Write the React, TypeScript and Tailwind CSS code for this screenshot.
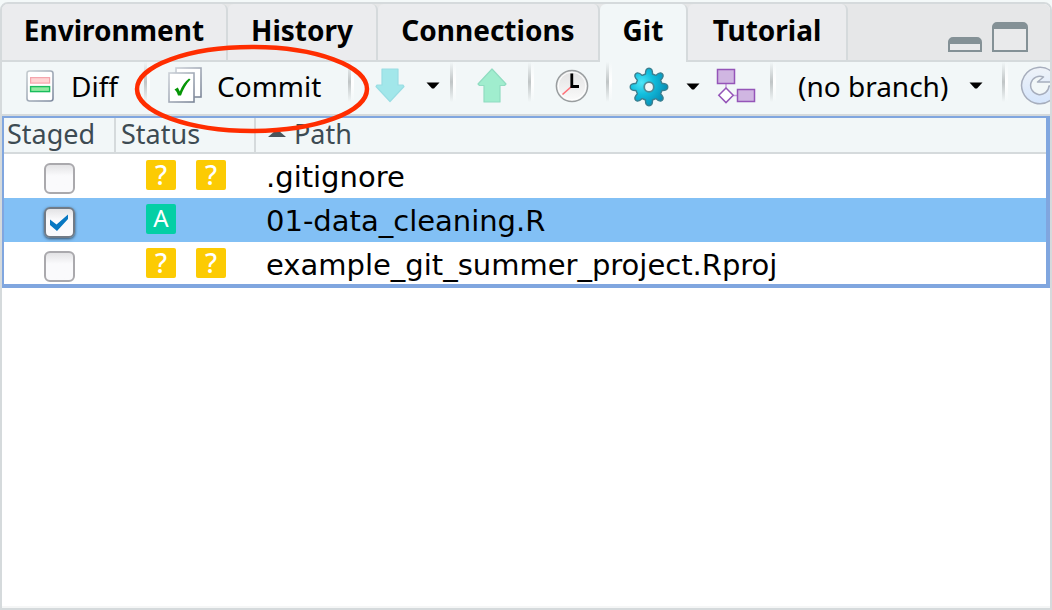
import { useState } from "react";

const tabs = [
  { name: "Environment", width: "w-[226px]" },
  { name: "History", width: "w-[150px]" },
  { name: "Connections", width: "w-[222px]" },
  { name: "Git", width: "w-[88px]" },
  { name: "Tutorial", width: "w-[160px]" },
];

type FileEntry = { path: string; status: string[]; staged: boolean };

const initialFiles: FileEntry[] = [
  { path: ".gitignore", status: ["?", "?"], staged: false },
  { path: "01-data_cleaning.R", status: ["A"], staged: true },
  { path: "example_git_summer_project.Rproj", status: ["?", "?"], staged: false },
];

function DiffIcon() {
  return (
    <svg width="28" height="32" viewBox="0 0 28 32" aria-hidden="true">
      <defs>
        <linearGradient id="paper" x1="0" y1="0" x2="1" y2="1">
          <stop offset="0" stopColor="#c5ccd0" />
          <stop offset="1" stopColor="#7f8ba0" />
        </linearGradient>
      </defs>
      <rect x="1" y="1" width="26" height="30" rx="2.5" fill="#fff" stroke="url(#paper)" strokeWidth="1.6" />
      <rect x="4.6" y="7.6" width="19" height="5.5" fill="#ffd4d4" stroke="#f5a5ad" strokeWidth="1.2" />
      <rect x="4.6" y="16.6" width="19" height="5" fill="#90e8a0" stroke="#19bd5c" strokeWidth="1.4" />
    </svg>
  );
}

function CommitIcon() {
  return (
    <svg width="36" height="38" viewBox="0 0 36 38" aria-hidden="true">
      <defs>
        <linearGradient id="sheet" x1="0" y1="0" x2="1" y2="1">
          <stop offset="0" stopColor="#cbd0d7" />
          <stop offset="1" stopColor="#7c8698" />
        </linearGradient>
      </defs>
      <rect x="8" y="1" width="25" height="29" fill="#fff" stroke="url(#sheet)" strokeWidth="1.6" />
      <rect x="1" y="6" width="25" height="29" fill="#fff" stroke="url(#sheet)" strokeWidth="1.6" />
      <path d="M6.5 22.5 L9.8 20.5 L11.8 24.5 C14 19 17 14.5 21 11.5 L22.5 12.5 C18 17 15.3 22.5 13 28.5 L10 28.5 C9.3 26 8.2 23.8 6.5 22.5Z" fill="#079607" />
    </svg>
  );
}

function ArrowIcon({ up }: { up?: boolean }) {
  return (
    <svg width="30" height="36" viewBox="0 0 30 36" aria-hidden="true">
      {up ? (
        <path d="M15 1 L29 16 L27.5 17.5 H23 V34 H7 V17.5 H2.5 L1 16Z" fill="#a0edce" stroke="#90dcc1" strokeWidth="1.2" strokeLinejoin="round" />
      ) : (
        <path d="M7 1 H23 V17 H28 L29 18.5 L15 33.5 L1 18.5 L2 17 H7Z" fill="#a2e7ea" stroke="#99dde3" strokeWidth="1.2" strokeLinejoin="round" />
      )}
    </svg>
  );
}

function ClockIcon() {
  return (
    <svg width="34" height="34" viewBox="0 0 34 34" aria-hidden="true">
      <defs>
        <linearGradient id="dial" x1="0" y1="0" x2="0" y2="1">
          <stop offset="0" stopColor="#e2e2e2" />
          <stop offset="1" stopColor="#fbfbfb" />
        </linearGradient>
      </defs>
      <circle cx="17" cy="17" r="15.6" fill="url(#dial)" stroke="#999d9f" strokeWidth="1.5" />
      <circle cx="17" cy="17" r="13.8" fill="none" stroke="#fff" strokeWidth="1" />
      <path d="M16.5 17.5 L7.5 25.5" stroke="#ff7078" strokeWidth="1.6" />
      <path d="M16.8 4.5 V17.5 H24" fill="none" stroke="#000" strokeWidth="2.8" />
    </svg>
  );
}

function GearIcon() {
  return (
    <svg width="40" height="40" viewBox="0 0 40 40" aria-hidden="true">
      <defs>
        <radialGradient id="gear" cx="0.3" cy="0.38" r="0.7">
          <stop offset="0" stopColor="#4fe6f8" />
          <stop offset="0.45" stopColor="#12bedd" />
          <stop offset="1" stopColor="#068db5" />
        </radialGradient>
      </defs>
      <path
        d="M16.5 7 Q16.3 1.2 20 1.2 Q23.7 1.2 23.5 7 L26.8 8.4 Q30.8 4.4 33.3 6.7 Q35.6 9.2 31.6 13.2 L33 16.5 Q38.8 16.3 38.8 20 Q38.8 23.7 33 23.5 L31.6 26.8 Q35.6 30.8 33.3 33.3 Q30.8 35.6 26.8 31.6 L23.5 33 Q23.7 38.8 20 38.8 Q16.3 38.8 16.5 33 L13.2 31.6 Q9.2 35.6 6.7 33.3 Q4.4 30.8 8.4 26.8 L7 23.5 Q1.2 23.7 1.2 20 Q1.2 16.3 7 16.5 L8.4 13.2 Q4.4 9.2 6.7 6.7 Q9.2 4.4 13.2 8.4Z"
        fill="url(#gear)"
        stroke="#3b7f90"
        strokeWidth="1.4"
        strokeLinejoin="round"
      />
      <circle cx="20" cy="20" r="4.8" fill="#f2f7f8" stroke="#4f8995" strokeWidth="1.8" />
    </svg>
  );
}

function BranchIcon() {
  return (
    <svg width="40" height="36" viewBox="0 0 40 36" aria-hidden="true">
      <g stroke="#9555b8" strokeWidth="1.5">
        <path d="M10 15 V21 M17 27.5 H22" fill="none" stroke="#c79fdd" />
        <rect x="1.5" y="1.5" width="17" height="14" fill="#d0b6e2" />
        <rect x="21.5" y="21.5" width="17" height="12" fill="#d0b6e2" />
        <path d="M10 20 L17.2 27.3 L10 34.6 L2.8 27.3Z" fill="#fff" />
      </g>
    </svg>
  );
}

function RefreshIcon() {
  return (
    <svg width="40" height="40" viewBox="0 0 40 40" className="shrink-0" aria-hidden="true">
      <defs>
        <linearGradient id="refresh" x1="0" y1="0" x2="0" y2="1">
          <stop offset="0" stopColor="#eff3f8" />
          <stop offset="1" stopColor="#d5e5fc" />
        </linearGradient>
      </defs>
      <path
        d="M33 7 A18.2 18.2 0 1 0 38 20 H29 A9.2 9.2 0 1 1 23.5 11 L17.5 16 H38 V2Z"
        fill="url(#refresh)"
        stroke="#a7aebd"
        strokeWidth="1.5"
        strokeLinejoin="round"
      />
    </svg>
  );
}

function Caret() {
  return (
    <svg width="14" height="8" viewBox="0 0 14 8" className="shrink-0" aria-hidden="true">
      <path d="M0.5 0.5 H13.5 L8 6.5 H6Z" fill="#000" />
    </svg>
  );
}

function Separator() {
  return (
    <div className="flex h-10 w-[6px] shrink-0 self-start">
      <div className="w-[3px] bg-linear-to-b from-[#f2f7f8] via-[#c0c5c6] to-[#f2f7f8]" />
      <div className="w-[3px] bg-linear-to-b from-[#f2f7f8] via-white to-[#f2f7f8]" />
    </div>
  );
}

export default function App() {
  const [files, setFiles] = useState(initialFiles);
  const [selected, setSelected] = useState(1);
  const [activeTab, setActiveTab] = useState("Git");

  const toggle = (index: number) =>
    setFiles(files.map((f, i) => (i === index ? { ...f, staged: !f.staged } : f)));

  return (
    <div className="flex min-h-screen flex-col bg-[#f4f9f9] pt-[2px] font-['Noto_Sans','Open_Sans',sans-serif] text-[28px] leading-8 text-black">
      <main className="relative flex flex-1 flex-col overflow-hidden rounded-t-lg border-2 border-[#d5dadc] bg-white">
        <header className="flex h-[58px] shrink-0 bg-[#e6e7e8]">
          <nav className="flex" role="tablist" aria-label="Pane">
            {tabs.map((tab) => (
              <button
                key={tab.name}
                type="button"
                role="tab"
                aria-selected={tab.name === activeTab}
                onClick={() => setActiveTab(tab.name)}
                className={`${tab.width} shrink-0 rounded-t-md border-r-2 border-[#d5dadc] font-bold ${
                  tab.name === activeTab ? "bg-[#f2f7f8] pb-[6px]" : "border-b-2 bg-[#ebecee] pb-1"
                }`}
              >
                {tab.name}
              </button>
            ))}
          </nav>
          <div className="flex flex-1 items-end justify-end gap-[10px] border-b-2 border-[#d5dadc] pr-[22px] pb-2">
            <button type="button" aria-label="Minimize" className="h-[15px] w-[34px] rounded-t-[5px] border-2 border-t-[7px] border-[#849196] bg-[#e9eaeb]" />
            <button type="button" aria-label="Maximize" className="h-[30px] w-9 rounded-t-[5px] border-2 border-t-[7px] border-[#849196] bg-[#e9eaeb]" />
          </div>
        </header>

        <div className="flex h-[54px] shrink-0 items-stretch overflow-hidden border-b-2 border-[#d5dadc] bg-[#f2f7f8] pb-[5px]" role="toolbar" aria-label="Git">
          <button type="button" className="flex w-[142px] shrink-0 items-center gap-[17px] pl-6">
            <DiffIcon />
            Diff
          </button>
          <Separator />
          <button type="button" className="flex w-[198px] shrink-0 items-center gap-[13px] pl-[18px]">
            <CommitIcon />
            Commit
          </button>
          <Separator />
          <button type="button" aria-label="Pull" className="flex w-24 shrink-0 items-center gap-[21px] pl-[21px]">
            <ArrowIcon />
            <Caret />
          </button>
          <Separator />
          <button type="button" aria-label="Push" className="flex w-[72px] shrink-0 items-center justify-center">
            <ArrowIcon up />
          </button>
          <Separator />
          <button type="button" aria-label="History" className="flex w-[72px] shrink-0 items-center pl-[21px]">
            <ClockIcon />
          </button>
          <Separator />
          <button type="button" aria-label="More" className="flex w-[104px] shrink-0 items-center gap-[17px] pt-[2px] pl-[17px]">
            <GearIcon />
            <Caret />
          </button>
          <button type="button" aria-label="New branch" className="flex w-[54px] shrink-0 items-center">
            <BranchIcon />
          </button>
          <Separator />
          <button type="button" className="flex w-[226px] shrink-0 items-center justify-between pr-[19px] pl-[22px] whitespace-nowrap">
            (no branch)
            <Caret />
          </button>
          <Separator />
          <button type="button" aria-label="Refresh" className="flex min-w-0 flex-1 items-center justify-start overflow-hidden pl-3">
            <RefreshIcon />
          </button>
        </div>

        <table className="w-full table-fixed border-separate border-spacing-0 border-2 border-r-4 border-b-4 border-[#80a6df]">
          <colgroup>
            <col className="w-[112px]" />
            <col className="w-[140px]" />
            <col />
          </colgroup>
          <thead>
            <tr className="h-9 bg-[#f2f7f8] text-left text-[27px] leading-8 text-[#3d4b53]">
              <th scope="col" className="border-r-2 border-b-2 border-[#d5dadc] p-0 pb-[2px] pl-[3px] font-normal">Staged</th>
              <th scope="col" className="border-r-2 border-b-2 border-[#d5dadc] p-0 pb-[2px] pl-[5px] font-normal">Status</th>
              <th scope="col" aria-sort="ascending" className="border-b-2 border-[#d5dadc] p-0 pb-[2px] pl-3 font-normal">
                <span className="flex items-center gap-2">
                  <svg width="18" height="8" viewBox="0 0 18 8" aria-hidden="true">
                    <path d="M0 7 L7.5 0.5 H10.5 L18 7Z" fill="#4a555b" />
                  </svg>
                  Path
                </span>
              </th>
            </tr>
          </thead>
          <tbody>
            {files.map((file, index) => (
              <tr
                key={file.path}
                onClick={() => setSelected(index)}
                className={`${index === files.length - 1 ? "h-[42px]" : "h-11"} ${index === selected ? "bg-[#82c0f5]" : "bg-white"}`}
              >
                <td className="p-0 align-top">
                  <span className="relative flex justify-center pt-[9px] pr-[2px]">
                    <input
                      type="checkbox"
                      aria-label={`Stage ${file.path}`}
                      checked={file.staged}
                      onChange={() => toggle(index)}
                      className="h-[31px] w-[31px] appearance-none rounded-[6px] border-2 border-[#aaa9ad] bg-linear-to-b from-[#e3e3e5] to-[#fafafc] to-40% checked:border-[#717b86] checked:shadow-[0_1px_3px_#31506b]"
                    />
                    {file.staged && (
                      <svg width="20" height="18" viewBox="0 0 20 18" className="pointer-events-none absolute top-4" aria-hidden="true">
                        <path d="M1 5.5 L7.5 10.5 L19 0.5 V5 L8 17 L1 11Z" fill="#0878c2" />
                      </svg>
                    )}
                  </span>
                </td>
                <td className="p-0 align-top">
                  <span className="flex gap-5 pt-[6px] pl-[30px]">
                    {file.status.map((code, i) => (
                      <span
                        key={i}
                        className={`flex h-[30px] w-[30px] items-center justify-center rounded-[2px] text-white leading-7 ${
                          code === "A" ? "bg-[#04cfa5] pb-[2px] text-2xl" : "bg-[#fccb03] text-[27px] font-medium"
                        }`}
                      >
                        {code}
                      </span>
                    ))}
                  </span>
                </td>
                <td className="p-0 pt-[7px] pl-[10px] align-top font-['DejaVu_Sans',sans-serif] text-[29px] whitespace-nowrap">
                  {file.path}
                </td>
              </tr>
            ))}
          </tbody>
        </table>
        <div className="flex-1 border-b-2 border-[#f5f6f6]" />

        <svg width="238" height="92" viewBox="0 0 238 92" className="pointer-events-none absolute top-[39px] left-[131px]" aria-hidden="true">
          <ellipse cx="119" cy="46" rx="115" ry="42" fill="none" stroke="#ff2d00" strokeWidth="4.5" />
        </svg>
      </main>
    </div>
  );
}
